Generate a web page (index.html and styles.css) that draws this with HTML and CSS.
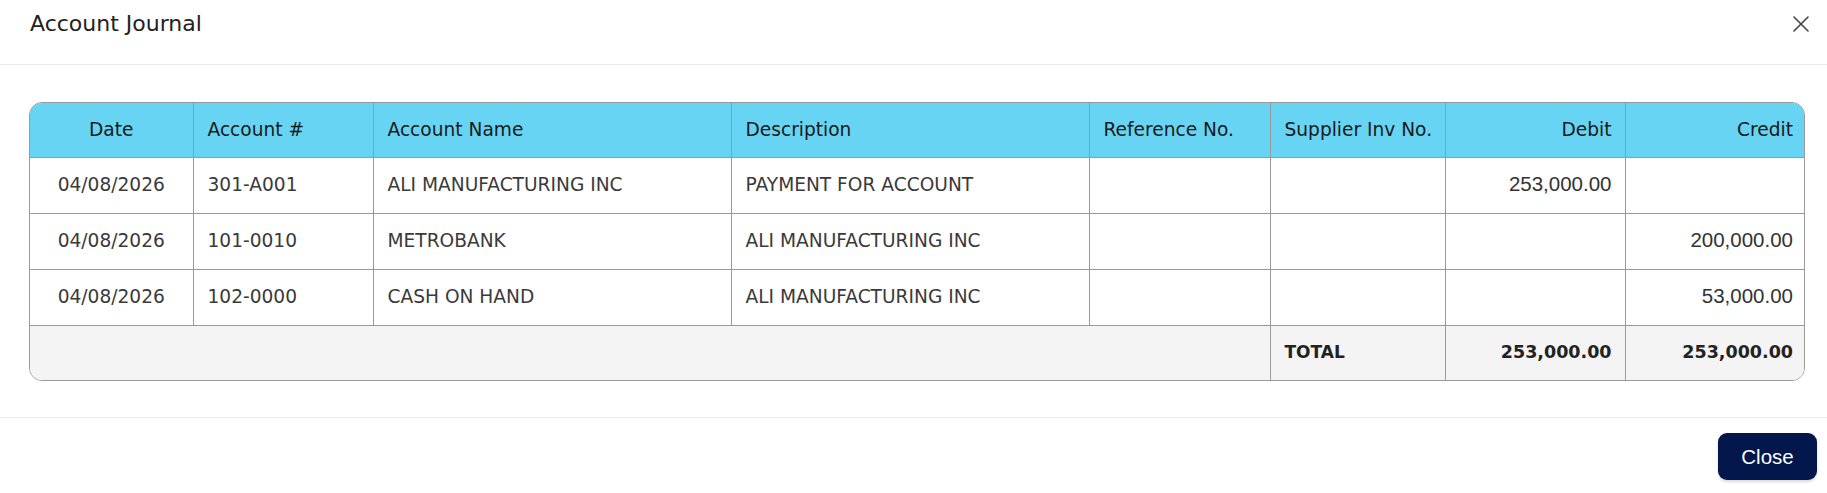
FILE: index.html
```html
<!DOCTYPE html>
<html lang="en">
<head>
<meta charset="utf-8">
<title>Account Journal</title>
<link rel="stylesheet" href="styles.css">
</head>
<body>
<div class="modal">
  <header class="modal-header">
    <h1 class="modal-title">Account Journal</h1>
    <button class="icon-close" aria-label="Close">
      <svg width="16" height="16" viewBox="0 0 16 16"><path d="M1 1L15 15M15 1L1 15" stroke="#444" stroke-width="1.6" fill="none" stroke-linecap="round"/></svg>
    </button>
  </header>
  <section class="modal-body">
    <div class="table-wrap">
      <table class="journal">
        <colgroup>
          <col class="c-date"><col class="c-acct"><col class="c-name"><col class="c-desc">
          <col class="c-ref"><col class="c-sup"><col class="c-debit"><col class="c-credit">
        </colgroup>
        <thead>
          <tr>
            <th class="center">Date</th>
            <th>Account #</th>
            <th>Account Name</th>
            <th>Description</th>
            <th>Reference No.</th>
            <th>Supplier Inv No.</th>
            <th class="right">Debit</th>
            <th class="right">Credit</th>
          </tr>
        </thead>
        <tbody>
          <tr>
            <td class="center">04/08/2026</td>
            <td>301-A001</td>
            <td>ALI MANUFACTURING INC</td>
            <td>PAYMENT FOR ACCOUNT</td>
            <td></td>
            <td></td>
            <td class="num">253,000.00</td>
            <td class="num"></td>
          </tr>
          <tr>
            <td class="center">04/08/2026</td>
            <td>101-0010</td>
            <td>METROBANK</td>
            <td>ALI MANUFACTURING INC</td>
            <td></td>
            <td></td>
            <td class="num"></td>
            <td class="num">200,000.00</td>
          </tr>
          <tr>
            <td class="center">04/08/2026</td>
            <td>102-0000</td>
            <td>CASH ON HAND</td>
            <td>ALI MANUFACTURING INC</td>
            <td></td>
            <td></td>
            <td class="num"></td>
            <td class="num">53,000.00</td>
          </tr>
        </tbody>
        <tfoot>
          <tr>
            <td colspan="5" class="blank"></td>
            <td class="total-label">TOTAL</td>
            <td class="total-num">253,000.00</td>
            <td class="total-num">253,000.00</td>
          </tr>
        </tfoot>
      </table>
    </div>
  </section>
  <footer class="modal-footer">
    <button class="btn-close">Close</button>
  </footer>
</div>
</body>
</html>
```
FILE: styles.css
```css
* { box-sizing: border-box; }
html, body { margin: 0; padding: 0; background: #fff; }
body { font-family: "DejaVu Sans", sans-serif; color: #222; }

.modal { width: 1827px; }

.modal-header {
  display: flex;
  align-items: center;
  justify-content: space-between;
  height: 65px;
  padding: 0 18px 16px 30px;
  border-bottom: 1px solid #ebebeb;
}
.modal-title {
  margin: 0;
  font-size: 22px;
  font-weight: 400;
  color: #222;
  line-height: 48px;
}
.icon-close {
  border: 0;
  background: none;
  padding: 0;
  width: 16px;
  height: 16px;
  display: flex;
}

.modal-body {
  padding: 37px 22px 36px 29px;
}
.table-wrap {
  border: 1px solid #9a9a9a;
  border-radius: 13px;
  overflow: hidden;
}
.journal {
  width: 100%;
  border-collapse: collapse;
  table-layout: fixed;
  font-size: 18.6px;
}
.c-date { width: 163px; }
.c-acct { width: 180px; }
.c-name { width: 358px; }
.c-desc { width: 358px; }
.c-ref { width: 181px; }
.c-sup { width: 175px; }
.c-debit { width: 180px; }
.c-credit { width: 181px; }

.journal th, .journal td {
  border: 1px solid #9a9a9a;
  padding: 0 13px 2px 14px;
  height: 56px;
  text-align: left;
  white-space: nowrap;
}
.journal th { height: 54px; padding-bottom: 0; }
.journal tr > :first-child { border-left: 0; }
.journal tr > :last-child { border-right: 0; }
.journal thead th { border-top: 0; }
.journal tfoot td { border-bottom: 0; height: 55px; }

.journal th {
  background: #66d4f2;
  font-weight: 400;
  color: #1a1a1a;
}
.journal td { color: #3a3a3a; }
.journal .center { text-align: center; padding-left: 8px; padding-right: 8px; }
.journal .right { text-align: right; }
.journal td.num {
  text-align: right;
  font-family: "Liberation Sans", Arial, sans-serif;
  font-size: 20.5px;
  color: #333;
}
.journal tfoot td { background: #f4f4f4; }
.journal td.blank { border-right: 1px solid #9a9a9a; }
.journal td.total-label {
  font-weight: 700;
  font-size: 17px;
  color: #222;
}
.journal td.total-num {
  text-align: right;
  font-weight: 700;
  font-size: 17.5px;
  color: #222;
}

.modal-footer {
  display: flex;
  justify-content: flex-end;
  padding: 15px 10px 13px 0;
  border-top: 1px solid #ebebeb;
}
.btn-close {
  width: 99px;
  height: 47px;
  border: 0;
  border-radius: 9px;
  background: #03174c;
  color: #fff;
  font-family: "Liberation Sans", Arial, sans-serif;
  font-size: 20.5px;
  box-shadow: 0 2px 3px rgba(0,0,0,0.15);
}
```
